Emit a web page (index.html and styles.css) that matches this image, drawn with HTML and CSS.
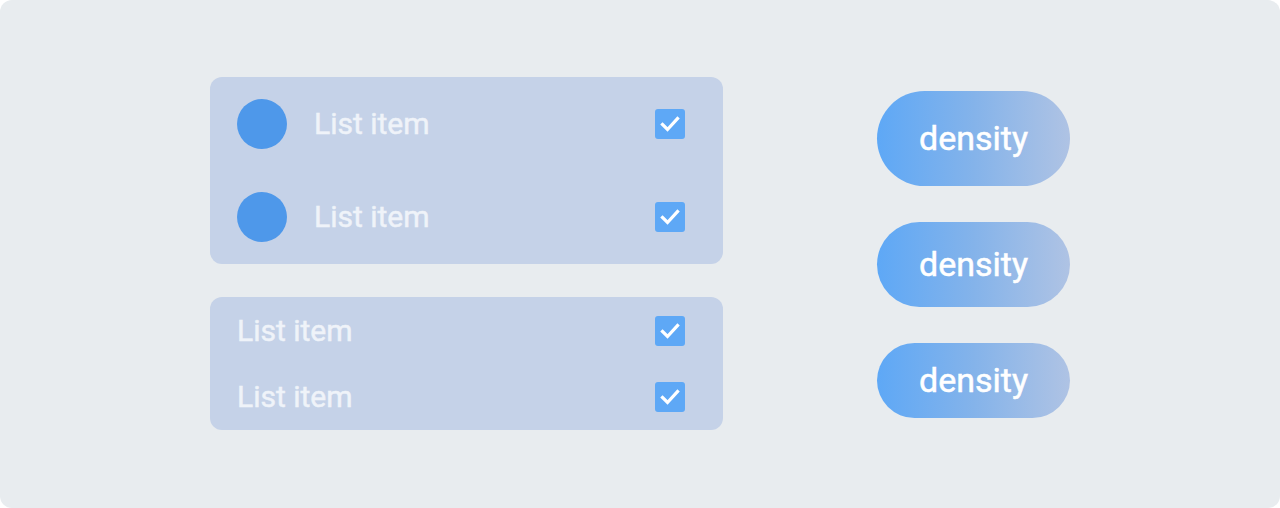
FILE: index.html
```html
<!DOCTYPE html>
<html>
<head>
<meta charset="utf-8">
<link rel="stylesheet" href="styles.css">
</head>
<body>
<div class="stage">
  <div class="lists">
    <div class="card card-avatar">
      <div class="row">
        <span class="avatar"></span>
        <span class="label">List item</span>
        <span class="check"><svg viewBox="0 0 30 30" width="30" height="30"><path d="M7.5 15.5 L12.5 20.5 L22.5 9.5" fill="none" stroke="#fff" stroke-width="3.2" stroke-linecap="square"/></svg></span>
      </div>
      <div class="row">
        <span class="avatar"></span>
        <span class="label">List item</span>
        <span class="check"><svg viewBox="0 0 30 30" width="30" height="30"><path d="M7.5 15.5 L12.5 20.5 L22.5 9.5" fill="none" stroke="#fff" stroke-width="3.2" stroke-linecap="square"/></svg></span>
      </div>
    </div>
    <div class="card card-plain">
      <div class="row">
        <span class="label">List item</span>
        <span class="check"><svg viewBox="0 0 30 30" width="30" height="30"><path d="M7.5 15.5 L12.5 20.5 L22.5 9.5" fill="none" stroke="#fff" stroke-width="3.2" stroke-linecap="square"/></svg></span>
      </div>
      <div class="row">
        <span class="label">List item</span>
        <span class="check"><svg viewBox="0 0 30 30" width="30" height="30"><path d="M7.5 15.5 L12.5 20.5 L22.5 9.5" fill="none" stroke="#fff" stroke-width="3.2" stroke-linecap="square"/></svg></span>
      </div>
    </div>
  </div>
  <div class="pills">
    <div class="pill pill-lg">density</div>
    <div class="pill pill-md">density</div>
    <div class="pill pill-sm">density</div>
  </div>
</div>
</body>
</html>
```
FILE: styles.css
```css
html, body {
  margin: 0;
  padding: 0;
  background: #ffffff;
}
body {
  font-family: Roboto, "Liberation Sans", sans-serif;
}
.stage {
  width: 1280px;
  height: 508px;
  box-sizing: border-box;
  background: #e8ecef;
  border-radius: 12px;
  display: flex;
  align-items: center;
  justify-content: center;
  gap: 154px;
}
.lists {
  width: 513px;
  display: flex;
  flex-direction: column;
  gap: 33px;
  margin-top: -1px;
}
.card {
  background: #c5d2e8;
  border-radius: 12px;
  display: flex;
  flex-direction: column;
}
.card-avatar {
  padding: 22px 38px 22px 27px;
  gap: 43px;
}
.card-plain {
  padding: 19px 38px 18px 27px;
  gap: 36px;
}
.row {
  display: flex;
  align-items: center;
}
.card-avatar .row { height: 50px; }
.card-plain .row { height: 30px; }
.avatar {
  width: 50px;
  height: 50px;
  border-radius: 50%;
  background: #4e98ea;
  margin-right: 27px;
  flex: none;
}
.label {
  flex: 1;
  font-size: 30px;
  font-weight: 400;
  color: #eff3f9;
  -webkit-text-stroke: 0.5px #eff3f9;
  line-height: 30px;
}
.check {
  width: 30px;
  height: 30px;
  border-radius: 3px;
  background: #5ea8f6;
  display: flex;
  flex: none;
}
.pills {
  display: flex;
  flex-direction: column;
  gap: 36px;
}
.pill {
  width: 193px;
  display: flex;
  align-items: center;
  justify-content: center;
  border-radius: 48px;
  background: linear-gradient(90deg, #5ea8f6 0%, #84b3ea 50%, #afc3e4 100%);
  color: #ffffff;
  -webkit-text-stroke: 0.5px #ffffff;
  font-size: 34px;
  font-weight: 400;
}
.pill-lg { height: 95px; }
.pill-md { height: 85px; }
.pill-sm { height: 75px; }
```
